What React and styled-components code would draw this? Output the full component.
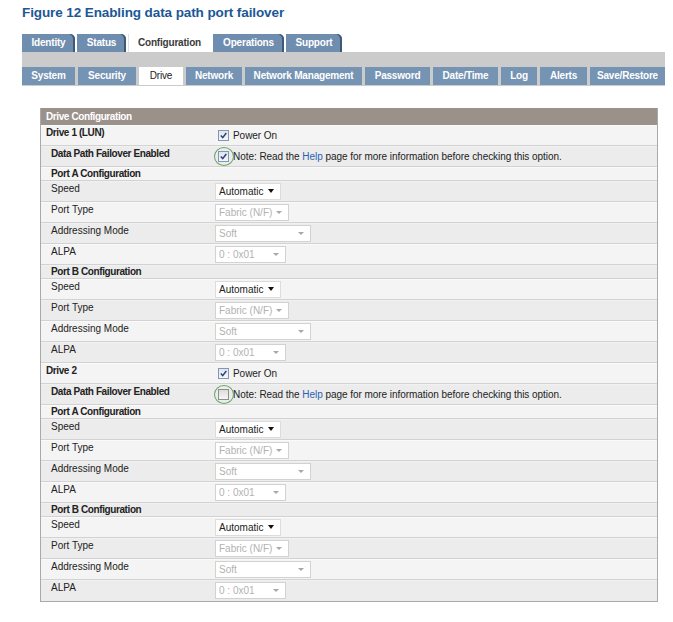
import React from 'react';
import styled, { createGlobalStyle } from 'styled-components';

const GlobalStyle = createGlobalStyle`
  body {
    margin: 0;
    background: #fff;
    font-family: "Liberation Sans", Arial, sans-serif;
  }
`;

const topTabs = [
  { label: 'Identity', w: 53 },
  { label: 'Status', w: 49 },
  { label: 'Configuration', w: 83, active: true },
  { label: 'Operations', w: 71 },
  { label: 'Support', w: 56 },
];

const subTabs = [
  { label: 'System', w: 53 },
  { label: 'Security', w: 58 },
  { label: 'Drive', w: 44, active: true },
  { label: 'Network', w: 56 },
  { label: 'Network Management', w: 117 },
  { label: 'Password', w: 65 },
  { label: 'Date/Time', w: 65 },
  { label: 'Log', w: 36 },
  { label: 'Alerts', w: 47 },
  { label: 'Save/Restore', w: 75 },
];

const portRows = (name) => [
  { type: 'section', label: `Port ${name} Configuration` },
  { type: 'select', label: 'Speed', value: 'Automatic', w: 66 },
  { type: 'select', label: 'Port Type', value: 'Fabric (N/F)', w: 74, disabled: true },
  { type: 'select', label: 'Addressing Mode', value: 'Soft', w: 96, disabled: true },
  { type: 'select', label: 'ALPA', value: '0 : 0x01', w: 71, disabled: true },
];

const driveRows = (name, failover) => [
  { type: 'drive', label: name },
  { type: 'failover', label: 'Data Path Failover Enabled', checked: failover },
  ...portRows('A'),
  ...portRows('B'),
];

const rows = [...driveRows('Drive 1 (LUN)', true), ...driveRows('Drive 2', false)];

const Page = styled.div`
  width: 673px;
  padding-left: 22px;
  box-sizing: border-box;
`;

const Title = styled.h1`
  margin: 0;
  padding-top: 5px;
  height: 34px;
  box-sizing: border-box;
  font: bold 13.5px/16px "Liberation Sans", Arial, sans-serif;
  color: #1b5796;
  letter-spacing: -0.1px;
`;

const TopTabBar = styled.div`
  display: flex;
  gap: 2px;
  height: 18px;
`;

const TopTab = styled.div`
  width: ${(p) => p.$w}px;
  height: 18px;
  box-sizing: border-box;
  background: ${(p) => (p.$active ? '#ffffff' : '#6f8daf')};
  color: ${(p) => (p.$active ? '#3a3a3a' : '#ffffff')};
  font-size: 10px;
  font-weight: bold;
  letter-spacing: -0.2px;
  line-height: 18px;
  text-align: center;
  border-top-right-radius: 5px;
  box-shadow: ${(p) => (p.$active ? 'inset 1px 0 0 #e2e2e2' : 'inset -2px 0 0 #3e5977')};
`;

const SubBar = styled.div`
  width: 643px;
  height: 34px;
  box-sizing: border-box;
  background: #cbcbcb;
  display: flex;
  align-items: flex-end;
  gap: 3px;
  padding-bottom: 1px;
`;

const SubTab = styled.div`
  width: ${(p) => p.$w}px;
  height: 18px;
  background: ${(p) => (p.$active ? '#ffffff' : '#7593b3')};
  color: ${(p) => (p.$active ? '#222' : '#ffffff')};
  font-size: 10px;
  font-weight: ${(p) => (p.$active ? 'normal' : 'bold')};
  letter-spacing: -0.2px;
  line-height: 18px;
  text-align: center;
  white-space: nowrap;
`;

const Panel = styled.div`
  margin: 22px 0 0 18px;
  width: 616px;
  border: 1px solid #a9a9a9;
  border-top: none;
`;

const PanelHeader = styled.div`
  height: 17px;
  background: #9b918b;
  color: #fff;
  font-size: 10px;
  font-weight: bold;
  letter-spacing: -0.4px;
  line-height: 17px;
  padding-left: 5px;
`;

const Row = styled.div`
  display: grid;
  grid-template-columns: 173px 1fr;
  height: ${(p) => (p.$short ? 14 : 21)}px;
  box-sizing: border-box;
  background: ${(p) => (p.$alt ? '#ececec' : '#f4f4f4')};
  border-bottom: 1px solid #d2d2d2;
  box-shadow: inset 0 1px 0 ${(p) => (p.$alt ? '#f1f1f1' : '#fafafa')};
  &:last-child {
    border-bottom: none;
  }
`;

const Label = styled.div`
  padding: ${(p) => (p.$short ? 1 : 2)}px 0 0 ${(p) => (p.$top ? 5 : 10)}px;
  font-size: 10px;
  font-weight: ${(p) => (p.$bold ? 'bold' : 'normal')};
  letter-spacing: ${(p) => (p.$bold ? '-0.4px' : '0')};
  line-height: 12px;
  color: #222;
  white-space: nowrap;
`;

const Value = styled.div`
  position: relative;
  display: flex;
  align-items: center;
  font-size: 10px;
  color: #222;
  white-space: nowrap;
`;

const ValueText = styled.span`
  letter-spacing: -0.05px;
`;

const Box = styled.span`
  width: 11px;
  height: 11px;
  box-sizing: border-box;
  margin: 0 4px 0 4px;
  border: 1px solid ${(p) => (p.$checked ? '#8496b2' : '#8e8e8e')};
  background: ${(p) =>
    p.$checked
      ? 'linear-gradient(#dfe6f1, #f3f6fa)'
      : 'linear-gradient(#dcdcdc, #f6f6f6)'};
  display: flex;
  align-items: center;
  justify-content: center;
`;

const Ring = styled.span`
  position: absolute;
  left: 0;
  top: 50%;
  width: 20px;
  height: 19px;
  margin-top: -9px;
  box-sizing: border-box;
  border: 1px solid #64a566;
  border-radius: 50%;
  pointer-events: none;
`;

const HelpLink = styled.span`
  color: #2a5fb2;
`;

const Select = styled.div`
  width: ${(p) => p.$w}px;
  height: 17px;
  box-sizing: border-box;
  margin-left: 1px;
  border: 1px solid ${(p) => (p.$disabled ? '#d2d2d2' : '#dcdcdc')};
  background: #fff;
  color: ${(p) => (p.$disabled ? '#b2b2b2' : '#222')};
  font-size: 10px;
  line-height: 15px;
  padding-left: 3px;
  display: flex;
  align-items: center;
  justify-content: space-between;
  padding-right: 6px;
`;

const Caret = styled.span`
  width: 0;
  height: 0;
  border-left: ${(p) => (p.$disabled ? 3 : 3.5)}px solid transparent;
  border-right: ${(p) => (p.$disabled ? 3 : 3.5)}px solid transparent;
  border-top: ${(p) => (p.$disabled ? 3 : 4)}px solid ${(p) => (p.$disabled ? '#a8a8a8' : '#111')};
`;

const Check = () => (
  <svg width="9" height="9" viewBox="0 0 9 9">
    <path d="M1.8 4.6 L3.7 6.6 L7.3 2" fill="none" stroke="#2d4175" strokeWidth="1.5" />
  </svg>
);

const Checkbox = ({ checked }) => (
  <Box $checked={checked}>{checked && <Check />}</Box>
);

const renderValue = (row) => {
  if (row.type === 'drive') {
    return (
      <Value>
        <Checkbox checked />
        <ValueText>Power On</ValueText>
      </Value>
    );
  }
  if (row.type === 'failover') {
    return (
      <Value>
        <Ring />
        <Checkbox checked={row.checked} />
        <ValueText>
          Note: Read the <HelpLink>Help</HelpLink> page for more information before checking this option.
        </ValueText>
      </Value>
    );
  }
  if (row.type === 'select') {
    return (
      <Value>
        <Select $w={row.w} $disabled={row.disabled}>
          {row.value}
          <Caret $disabled={row.disabled} />
        </Select>
      </Value>
    );
  }
  return <Value />;
};

export default function App() {
  return (
    <Page>
      <GlobalStyle />
      <Title>Figure 12 Enabling data path port failover</Title>
      <TopTabBar>
        {topTabs.map((t) => (
          <TopTab key={t.label} $w={t.w} $active={t.active}>
            {t.label}
          </TopTab>
        ))}
      </TopTabBar>
      <SubBar>
        {subTabs.map((t) => (
          <SubTab key={t.label} $w={t.w} $active={t.active}>
            {t.label}
          </SubTab>
        ))}
      </SubBar>
      <Panel>
        <PanelHeader>Drive Configuration</PanelHeader>
        {rows.map((row, i) => (
          <Row key={i} $alt={i % 2 === 1} $short={row.type === 'section'}>
            <Label
              $top={row.type === 'drive'}
              $bold={row.type !== 'select'}
              $short={row.type === 'section'}
            >
              {row.label}
            </Label>
            {renderValue(row)}
          </Row>
        ))}
      </Panel>
    </Page>
  );
}
